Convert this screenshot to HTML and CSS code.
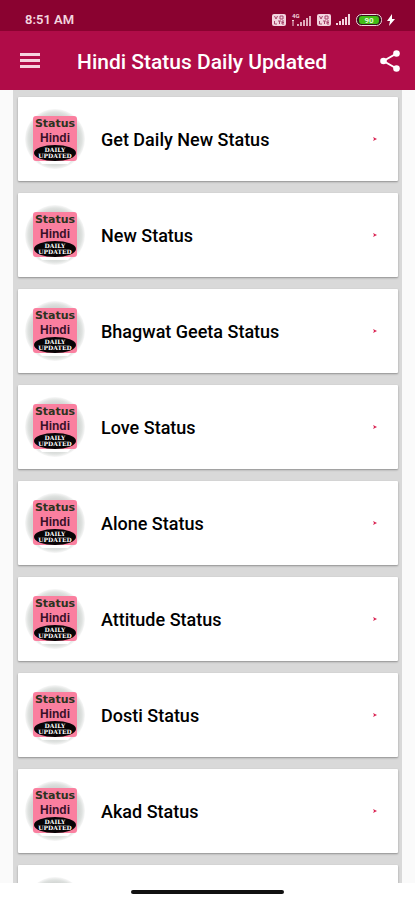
FILE: index.html
```html
<!DOCTYPE html>
<html lang="en">
<head>
<meta charset="utf-8">
<meta name="viewport" content="width=device-width, initial-scale=1">
<title>Hindi Status Daily Updated</title>
<link rel="stylesheet" href="styles.css">
</head>
<body>
<svg class="defs" aria-hidden="true">
  <defs>
    <radialGradient id="disc">
      <stop offset="0.8" stop-color="#d3d6d4"/>
      <stop offset="0.9" stop-color="#dfe2e0"/>
      <stop offset="1" stop-color="#f8f8f8"/>
    </radialGradient>
  </defs>
  <symbol id="logo" viewBox="0 0 60 60">
    <circle cx="30" cy="30" r="30" fill="url(#disc)"/>
    <path d="M12 50H48L43 55H17Z" fill="#fff"/>
    <rect x="8" y="7" width="44" height="45" rx="3" fill="#fa7f9f"/>
    <text class="logo-status" x="30" y="18" text-anchor="middle">Status</text>
    <text class="logo-hindi" x="30" y="33" text-anchor="middle">Hindi</text>
    <ellipse cx="30" cy="44" rx="21" ry="8" fill="#080406"/>
    <text class="logo-small" x="30" y="43" text-anchor="middle">DAILY</text>
    <text class="logo-small" x="30" y="49" text-anchor="middle">UPDATED</text>
  </symbol>
  <symbol id="signal" viewBox="0 0 15 11">
    <path d="M0 11V9H2V11ZM3 11V7H5V11ZM6 11V5H8V11ZM9 11V3H11V11ZM12 11V0H14V11Z"/>
  </symbol>
  <symbol id="volte" viewBox="0 0 14 12">
    <rect width="14" height="12" rx="2" fill="#f3d5df"/>
    <path d="M2.500 2L4 5L5.500 2M8 2H11V5H8ZM2.500 7V10H5M6 7H9M7.500 7V10M12 7H10V10H12M10 8.500H12" fill="none" stroke="#a8436a"/>
  </symbol>
</svg>
<div class="status-bar">
  <span class="clock">8:51 AM</span>
  <div class="indicators">
    <svg class="volte"><use href="#volte"/></svg>
    <svg class="network" viewBox="0 0 21 14"><text class="network-type" x="1" y="5">4G</text><path d="M2 7V13M1 8L2 7L3 8" fill="none" stroke="#f3d5df"/><path d="M6 13V11H8V13ZM9 13V9H11V13ZM12 13V7H14V13ZM15 13V5H17V13ZM18 13V3H20V13Z" opacity=".8"/></svg>
    <svg class="volte"><use href="#volte"/></svg>
    <svg class="signal"><use href="#signal"/></svg>
    <svg class="battery" viewBox="0 0 26 12"><rect x=".5" y=".5" width="25" height="11" rx="5" fill="#38101c" stroke="#f3d5df"/><rect x="3" y="2" width="20" height="8" rx="3" fill="#43bd17"/><text class="battery-level" x="13" y="9" text-anchor="middle">90</text></svg>
    <svg class="bolt" viewBox="0 0 8 12"><path d="M5 0L0 7H3L2 12L8 5H5Z"/></svg>
  </div>
</div>
<header class="app-bar">
  <button class="icon-button" type="button" aria-label="Menu"><svg class="menu-icon" viewBox="0 0 20 16"><path d="M0 0H20V3H0ZM0 6H20V9H0ZM0 12H20V15H0Z" fill="#f6d3df"/></svg></button>
  <h1 class="title">Hindi Status Daily Updated</h1>
  <button class="icon-button" type="button" aria-label="Share"><svg class="share-icon" viewBox="0 0 20 22"><path d="M16.500 3.500L3.500 11L16.500 18.500" fill="none" stroke="#fff" stroke-width="2"/><circle cx="16.500" cy="3.500" r="3.300"/><circle cx="3.500" cy="11" r="3.300"/><circle cx="16.500" cy="18.500" r="3.300"/></svg></button>
</header>
<main class="content">
  <nav class="list" aria-label="Categories">
    <a class="card" href="#daily"><svg class="logo"><use href="#logo"/></svg><span class="label">Get Daily New Status</span><svg class="arrow" viewBox="0 0 4 4"><path d="M0 0L4 2L0 4L1 2Z"/></svg></a>
    <a class="card" href="#new"><svg class="logo"><use href="#logo"/></svg><span class="label">New Status</span><svg class="arrow" viewBox="0 0 4 4"><path d="M0 0L4 2L0 4L1 2Z"/></svg></a>
    <a class="card" href="#geeta"><svg class="logo"><use href="#logo"/></svg><span class="label">Bhagwat Geeta Status</span><svg class="arrow" viewBox="0 0 4 4"><path d="M0 0L4 2L0 4L1 2Z"/></svg></a>
    <a class="card" href="#love"><svg class="logo"><use href="#logo"/></svg><span class="label">Love Status</span><svg class="arrow" viewBox="0 0 4 4"><path d="M0 0L4 2L0 4L1 2Z"/></svg></a>
    <a class="card" href="#alone"><svg class="logo"><use href="#logo"/></svg><span class="label">Alone Status</span><svg class="arrow" viewBox="0 0 4 4"><path d="M0 0L4 2L0 4L1 2Z"/></svg></a>
    <a class="card" href="#attitude"><svg class="logo"><use href="#logo"/></svg><span class="label">Attitude Status</span><svg class="arrow" viewBox="0 0 4 4"><path d="M0 0L4 2L0 4L1 2Z"/></svg></a>
    <a class="card" href="#dosti"><svg class="logo"><use href="#logo"/></svg><span class="label">Dosti Status</span><svg class="arrow" viewBox="0 0 4 4"><path d="M0 0L4 2L0 4L1 2Z"/></svg></a>
    <a class="card" href="#akad"><svg class="logo"><use href="#logo"/></svg><span class="label">Akad Status</span><svg class="arrow" viewBox="0 0 4 4"><path d="M0 0L4 2L0 4L1 2Z"/></svg></a>
    <div class="card"><svg class="logo" viewBox="0 0 60 60"><circle cx="30" cy="30" r="30" fill="url(#disc)"/></svg></div>
  </nav>
</main>
<footer class="gesture-bar"><div class="gesture-handle"></div></footer>
</body>
</html>
```
FILE: styles.css
```css
* { box-sizing: border-box; }
body {
  margin: 0;
  height: 100vh;
  display: flex;
  flex-direction: column;
  background: #fff;
  font-family: Roboto, "Liberation Sans", sans-serif;
  font-weight: 500;
}
svg { display: block; flex: none; }
.defs { position: absolute; width: 0; height: 0; }
.status-bar {
  flex: none;
  height: 31px;
  padding: 8px 20px 0 25px;
  display: flex;
  align-items: center;
  justify-content: space-between;
  background: #8a0230;
  color: #f3d5df;
}
.clock { font-size: 13px; font-weight: 600; }
.indicators { display: flex; align-items: center; gap: 5px; fill: #f3d5df; }
.volte { width: 14px; height: 12px; }
.network { width: 21px; height: 14px; }
.network-type { font-size: 6px; font-weight: 700; }
.signal { width: 15px; height: 11px; }
.battery { width: 26px; height: 12px; }
.battery-level { font-size: 8px; font-weight: 700; fill: #e2f8d8; }
.bolt { width: 8px; height: 12px; fill: #fff; }
.app-bar {
  flex: none;
  height: 59px;
  padding: 0 5px 0 10px;
  display: flex;
  align-items: center;
  background: #b00c48;
  color: #fff;
}
.icon-button {
  width: 40px;
  height: 40px;
  padding: 0;
  border: 0;
  background: none;
  display: grid;
  place-items: center;
  fill: #fff;
}
.menu-icon { width: 20px; height: 16px; }
.share-icon { width: 20px; height: 22px; }
.title { flex: 1; margin: 0; padding: 2px 0 0 27px; font-size: 21px; font-weight: 500; white-space: nowrap; }
.content { flex: 1; min-height: 0; overflow: hidden; padding: 0 13px; background: #fafafa; }
.list {
  padding: 7px 4px 0 5px;
  display: flex;
  flex-direction: column;
  gap: 12px;
  background: #d9d9d9;
}
.card {
  flex: none;
  height: 84px;
  padding: 0 21px 0 7px;
  display: flex;
  align-items: center;
  gap: 16px;
  border-radius: 1px;
  background: #fff;
  box-shadow: 0 1px 2px #8f8f8f;
  color: #000;
  text-decoration: none;
}
.logo { width: 60px; height: 60px; }
.logo-status { font: 700 11px "DejaVu Sans", sans-serif; fill: #2c3320; }
.logo-hindi { font: 700 12px "Liberation Sans", sans-serif; fill: #3a1028; }
.logo-small { font: 700 6px "DejaVu Serif", serif; fill: #fff; }
.label { flex: 1; font-size: 18px; }
.arrow { width: 4px; height: 4px; fill: #d92050; }
.gesture-bar { flex: none; height: 17px; padding-top: 7px; background: #fff; }
.gesture-handle { width: 37%; height: 4px; margin: 0 auto; border-radius: 2px; background: #111; }
```
